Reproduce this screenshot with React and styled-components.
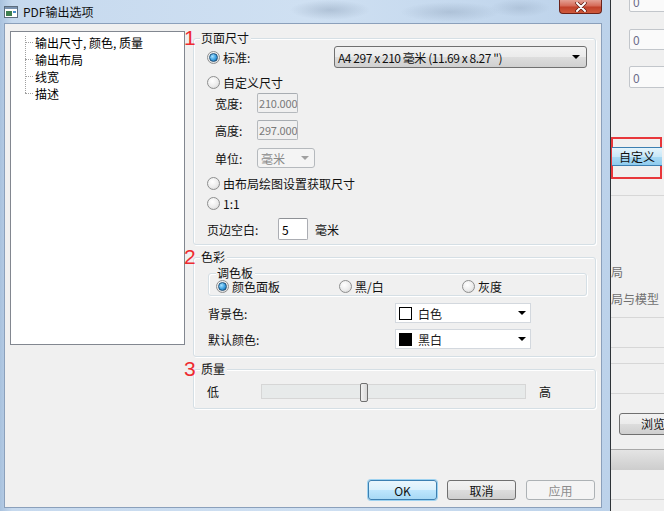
import React from "react";
import styled, { createGlobalStyle } from "styled-components";

const GlobalStyle = createGlobalStyle`
  html, body { margin: 0; padding: 0; }
  body {
    width: 664px;
    height: 511px;
    overflow: hidden;
    background: #f0f0f0;
    font-family: "Noto Sans CJK SC", "Liberation Sans", sans-serif;
    font-size: 12px;
    color: #1b1b1b;
  }
  * { box-sizing: border-box; }
`;

const Screen = styled.div`
  display: flex;
  width: 664px;
  height: 511px;
`;

/* ---------- dialog frame ---------- */
const Dialog = styled.div`
  width: 611px;
  height: 511px;
  flex-shrink: 0;
  display: flex;
  flex-direction: column;
  padding: 0 8px 3px 4px;
  border-right: 1px solid #2e3338;
  background:
    radial-gradient(ellipse 40px 10px at 330px 10px, rgba(120, 140, 165, 0.35), transparent),
    radial-gradient(ellipse 50px 10px at 450px 12px, rgba(120, 140, 165, 0.3), transparent),
    radial-gradient(ellipse 30px 9px at 520px 8px, rgba(120, 140, 165, 0.25), transparent),
    linear-gradient(90deg, #a9c2de 0%, #c6d9ee 2%, #cfe0f2 50%, #bcd2ea 100%);
`;

const TitleBar = styled.div`
  height: 23px;
  display: flex;
  align-items: center;
`;

const TitleText = styled.span`
  margin-left: 5px;
  font-size: 12px;
  line-height: 14px;
  color: #111;
`;

const CloseButton = styled.div`
  margin-left: auto;
  align-self: flex-start;
  width: 43px;
  height: 14px;
  border: 1px solid #6b2219;
  border-top: none;
  border-radius: 0 0 4px 4px;
  background: linear-gradient(#e4a093 0%, #d56b58 45%, #c1412a 55%, #cf5a3c 100%);
  display: flex;
  align-items: center;
  justify-content: center;
`;

const Client = styled.div`
  flex: 1;
  display: flex;
  flex-direction: column;
  background: #f0f0f0;
  border: 1px solid #8ba0bb;
`;

const MainRow = styled.div`
  display: flex;
  padding: 7px 0 0 5px;
`;

/* ---------- tree ---------- */
const Tree = styled.div`
  width: 175px;
  height: 314px;
  border: 1px solid #828790;
  background: #fff;
  padding-top: 2px;
`;

const TreeList = styled.div`
  position: relative;
  padding-left: 24px;
  &::before {
    content: "";
    position: absolute;
    left: 14px;
    top: 2px;
    height: 57px;
    border-left: 1px dotted #a0a0a0;
  }
`;

const TreeItem = styled.div`
  position: relative;
  height: 17px;
  line-height: 17px;
  color: #000;
  &::before {
    content: "";
    position: absolute;
    left: -10px;
    top: 8px;
    width: 8px;
    border-top: 1px dotted #a0a0a0;
  }
`;

/* ---------- group boxes ---------- */
const Column = styled.div`
  margin-left: 8px;
  width: 403px;
  padding-top: 7px;
  display: flex;
  flex-direction: column;
`;

const GroupBox = styled.div`
  position: relative;
  height: ${(p) => p.$h}px;
  margin-top: ${(p) => p.$mt || 0}px;
  margin-left: ${(p) => p.$ml || 0}px;
  width: ${(p) => (p.$w ? `${p.$w}px` : "auto")};
  border: 1px solid #d5dfe5;
  border-radius: 3px;
  box-shadow: inset 1px 1px 0 #fff, 1px 1px 0 #fff;
  padding: ${(p) => p.$pad || "0"};
`;

const GroupTitle = styled.span`
  position: absolute;
  left: ${(p) => p.$left || 6}px;
  top: -9px;
  padding: 0 2px 0 1px;
  line-height: 15px;
  background: #f0f0f0;
  color: #111;
`;

const Mark = styled.span`
  position: absolute;
  left: -10px;
  top: -12px;
  font-family: "Liberation Sans", sans-serif;
  font-size: 21px;
  line-height: 21px;
  color: #ee2b30;
`;

const GroupBody = styled.div`
  display: flex;
  flex-direction: column;
  padding: ${(p) => p.$pt}px 8px 0 13px;
`;

const Row = styled.div`
  display: flex;
  align-items: center;
  height: ${(p) => p.$h || 20}px;
  margin-top: ${(p) => p.$mt || 0}px;
  padding-left: ${(p) => p.$pl || 0}px;
`;

const Label = styled.span`
  width: ${(p) => (p.$w ? `${p.$w}px` : "auto")};
  margin-left: ${(p) => p.$ml || 0}px;
  flex-shrink: 0;
  line-height: 15px;
  color: #111;
`;

/* ---------- radio ---------- */
const RadioWrap = styled.label`
  display: flex;
  align-items: center;
  gap: 3px;
  width: ${(p) => (p.$w ? `${p.$w}px` : "auto")};
  line-height: 15px;
  color: #111;
`;

const RadioCircle = styled.span`
  width: 13px;
  height: 13px;
  border-radius: 50%;
  border: 1px solid #8e8f8f;
  background: radial-gradient(circle at 40% 35%, #ffffff 0%, #ececec 55%, #cfcfcf 100%);
  display: flex;
  align-items: center;
  justify-content: center;
  &::after {
    content: "";
    display: ${(p) => (p.$on ? "block" : "none")};
    width: 7px;
    height: 7px;
    border-radius: 50%;
    border: 1px solid #1d4f78;
    background: radial-gradient(circle at 35% 35%, #a6e2ff 0%, #3a9ee0 55%, #11568f 100%);
  }
`;

const Radio = ({ on, w, children }) => (
  <RadioWrap $w={w}>
    <RadioCircle $on={on} />
    {children}
  </RadioWrap>
);

/* ---------- inputs ---------- */
const TextBox = styled.div`
  width: ${(p) => p.$w}px;
  height: ${(p) => p.$h || 20}px;
  border: 1px solid ${(p) => (p.$disabled ? "#b5b9bd" : "#abadb3")};
  border-top-color: ${(p) => (p.$disabled ? "#a8adb2" : "#8e9196")};
  border-radius: 2px;
  background: ${(p) => (p.$disabled ? "#f0f0f0" : "#fff")};
  color: ${(p) => (p.$disabled ? "#7a7a7a" : "#000")};
  padding-left: ${(p) => (p.$disabled ? 1 : 3)}px;
  font-size: ${(p) => (p.$disabled ? 11 : 12)}px;
  letter-spacing: ${(p) => (p.$disabled ? "-0.2px" : "0")};
  display: flex;
  align-items: center;
  line-height: 15px;
  white-space: nowrap;
  overflow: hidden;
`;

const Arrow = styled.span`
  margin-left: auto;
  margin-right: ${(p) => p.$mr || 6}px;
  width: 0;
  height: 0;
  border-left: 4px solid transparent;
  border-right: 4px solid transparent;
  border-top: 4px solid ${(p) => (p.$dim ? "#a0a0a0" : "#000")};
`;

const Combo = styled.div`
  width: ${(p) => p.$w}px;
  height: ${(p) => p.$h || 22}px;
  margin-left: ${(p) => (p.$auto ? "auto" : "0")};
  border: 1px solid ${(p) => (p.$disabled ? "#b5b9bd" : "#707070")};
  border-radius: 3px;
  background: ${(p) =>
    p.$disabled
      ? "#f4f4f4"
      : "linear-gradient(#f3f3f3 0%, #ebebeb 50%, #dddddd 51%, #d0d0d0 100%)"};
  color: ${(p) => (p.$disabled ? "#8a8a8a" : "#111")};
  display: flex;
  align-items: center;
  padding-left: 3px;
  line-height: 15px;
  white-space: nowrap;
`;

const ComboText = styled.span`
  letter-spacing: -0.45px;
`;

const ColorCombo = styled.div`
  width: 136px;
  height: 20px;
  border: 1px solid #d3d8de;
  background: #fff;
  display: flex;
  align-items: center;
  padding-left: 3px;
  line-height: 15px;
  margin-left: auto;
  margin-right: 56px;
`;

const Swatch = styled.span`
  width: 13px;
  height: 13px;
  border: 1px solid #000;
  background: ${(p) => p.$c};
  margin-right: 6px;
`;

/* ---------- slider ---------- */
const Track = styled.div`
  position: relative;
  width: 265px;
  height: 15px;
  background: #e7eaea;
  border: 1px solid #d6d6d6;
`;

const Thumb = styled.div`
  position: absolute;
  left: 98px;
  top: -2px;
  width: 8px;
  height: 19px;
  border: 1px solid #707070;
  border-radius: 2px;
  background: linear-gradient(90deg, #f2f2f2, #d8d8d8);
`;

/* ---------- buttons ---------- */
const ButtonRow = styled.div`
  margin-top: auto;
  display: flex;
  justify-content: flex-end;
  gap: 10px;
  padding: 0 6px 7px 0;
`;

const Button = styled.div`
  width: 69px;
  height: 20px;
  border-radius: 3px;
  display: flex;
  align-items: center;
  justify-content: center;
  line-height: 15px;
  border: 1px solid
    ${(p) => (p.$variant === "default" ? "#3c7fb1" : p.$variant === "disabled" ? "#adb2b5" : "#707070")};
  background: ${(p) =>
    p.$variant === "default"
      ? "linear-gradient(#eaf6fd 0%, #d9f0fc 50%, #bee6fd 51%, #a7d9f5 100%)"
      : p.$variant === "disabled"
      ? "#f4f4f4"
      : "linear-gradient(#f2f2f2 0%, #ebebeb 50%, #dddddd 51%, #cfcfcf 100%)"};
  box-shadow: ${(p) => (p.$variant === "default" ? "0 0 0 1px #9ed2f0" : "none")};
  color: ${(p) => (p.$variant === "disabled" ? "#8d8d8d" : "#111")};
`;

/* ---------- background application ---------- */
const BackApp = styled.div`
  flex: 1;
  display: flex;
  flex-direction: column;
  background: #f0f0f0;
  overflow: hidden;
`;

const BackInput = styled.div`
  margin-top: ${(p) => p.$mt}px;
  margin-left: 18px;
  height: ${(p) => p.$h}px;
  width: 60px;
  flex-shrink: 0;
  border: 1px solid #c2c6cb;
  border-radius: 2px;
  background: #fafafa;
  color: #6d6d8a;
  padding-left: 3px;
  display: flex;
  align-items: center;
  line-height: 15px;
`;

const RedMark = styled.div`
  margin-top: 49px;
  height: 42px;
  width: 51px;
  flex-shrink: 0;
  border: 2px solid #e8373b;
  padding-top: 8px;
`;

const BlueButton = styled.div`
  height: 19px;
  margin: 0 -2px 0 -1px;
  border-top: 1px solid #3c7fb1;
  border-bottom: 1px solid #3c7fb1;
  background: linear-gradient(#e5f4fc 0%, #c9e8f8 50%, #a9daf4 51%, #8fcbee 100%);
  padding-left: 7px;
  line-height: 17px;
  color: #111;
`;

const Divider = styled.div`
  margin-top: ${(p) => p.$mt}px;
  height: 1px;
  flex-shrink: 0;
  background: #d7d7d7;
`;

const BackText = styled.div`
  margin-top: ${(p) => p.$mt}px;
  height: 16px;
  line-height: 16px;
  flex-shrink: 0;
  color: #707070;
  white-space: nowrap;
`;

const BackButton = styled.div`
  margin: ${(p) => p.$mt}px 0 0 8px;
  height: 22px;
  width: 60px;
  flex-shrink: 0;
  border: 1px solid #707070;
  border-radius: 3px;
  background: linear-gradient(#f2f2f2 0%, #ebebeb 50%, #dddddd 51%, #cfcfcf 100%);
  padding-left: 21px;
  line-height: 20px;
  color: #111;
`;

const BackBar = styled.div`
  margin-top: 14px;
  height: 21px;
  flex-shrink: 0;
  border-top: 1px solid #a8a8a8;
  background: linear-gradient(#e4e4e4, #cdcdcd);
`;

/* ---------- icons ---------- */
const WindowIcon = () => (
  <svg width="14" height="12" viewBox="0 0 14 12">
    <rect x="0.5" y="0.5" width="13" height="11" fill="#fff" stroke="#5d6d7e" />
    <rect x="1" y="1" width="12" height="2" fill="#7b93b0" />
    <rect x="2" y="5" width="6" height="5" fill="#3f7f4f" />
    <rect x="9" y="5" width="3" height="2" fill="#4a8fc9" />
  </svg>
);

const CloseGlyph = () => (
  <svg width="12" height="10" viewBox="0 0 12 10">
    <path d="M2 1 L10 9 M10 1 L2 9" stroke="#5a1a12" strokeWidth="3.4" strokeLinecap="round" />
    <path d="M2 1 L10 9 M10 1 L2 9" stroke="#fff" strokeWidth="2" strokeLinecap="round" />
  </svg>
);

export default function App() {
  return (
    <Screen>
      <GlobalStyle />
      <Dialog>
        <TitleBar>
          <WindowIcon />
          <TitleText>PDF输出选项</TitleText>
          <CloseButton>
            <CloseGlyph />
          </CloseButton>
        </TitleBar>
        <Client>
          <MainRow>
            <Tree>
              <TreeList>
                <TreeItem>输出尺寸, 颜色, 质量</TreeItem>
                <TreeItem>输出布局</TreeItem>
                <TreeItem>线宽</TreeItem>
                <TreeItem>描述</TreeItem>
              </TreeList>
            </Tree>
            <Column>
              <GroupBox $h={207}>
                <Mark>1</Mark>
                <GroupTitle>页面尺寸</GroupTitle>
                <GroupBody $pt={7}>
                  <Row $h={22}>
                    <Radio on>标准:</Radio>
                    <Combo $w={253} $auto>
                      <ComboText>A4 297 x 210 毫米 (11.69 x 8.27 ")</ComboText>
                      <Arrow />
                    </Combo>
                  </Row>
                  <Row $mt={4}>
                    <Radio>自定义尺寸</Radio>
                  </Row>
                  <Row $mt={1} $pl={8}>
                    <Label $w={42}>宽度:</Label>
                    <TextBox $w={41} $disabled>210.000</TextBox>
                  </Row>
                  <Row $mt={7} $pl={8}>
                    <Label $w={42}>高度:</Label>
                    <TextBox $w={41} $disabled>297.000</TextBox>
                  </Row>
                  <Row $mt={8} $pl={8}>
                    <Label $w={42}>单位:</Label>
                    <Combo $w={58} $h={20} $disabled>
                      毫米
                      <Arrow $dim $mr={5} />
                    </Combo>
                  </Row>
                  <Row $mt={5}>
                    <Radio>由布局绘图设置获取尺寸</Radio>
                  </Row>
                  <Row>
                    <Radio>1:1</Radio>
                  </Row>
                  <Row $h={22} $mt={5}>
                    <Label $w={71}>页边空白:</Label>
                    <TextBox $w={30} $h={22}>5</TextBox>
                    <Label $ml={7}>毫米</Label>
                  </Row>
                </GroupBody>
              </GroupBox>

              <GroupBox $h={100} $mt={12}>
                <Mark>2</Mark>
                <GroupTitle>色彩</GroupTitle>
                <GroupBox $h={23} $w={379} $ml={14} $mt={15} $pad="5px 0 0 7px">
                  <GroupTitle $left={7}>调色板</GroupTitle>
                  <Row $h={14}>
                    <Radio on w={123}>颜色面板</Radio>
                    <Radio w={123}>黑/白</Radio>
                    <Radio w={123}>灰度</Radio>
                  </Row>
                </GroupBox>
                <GroupBody $pt={7}>
                  <Row $pl={1}>
                    <Label>背景色:</Label>
                    <ColorCombo>
                      <Swatch $c="#fff" />
                      白色
                      <Arrow $mr={4} />
                    </ColorCombo>
                  </Row>
                  <Row $mt={6} $pl={1}>
                    <Label>默认颜色:</Label>
                    <ColorCombo>
                      <Swatch $c="#000" />
                      黑白
                      <Arrow $mr={4} />
                    </ColorCombo>
                  </Row>
                </GroupBody>
              </GroupBox>

              <GroupBox $h={40} $mt={12}>
                <Mark>3</Mark>
                <GroupTitle>质量</GroupTitle>
                <GroupBody $pt={11}>
                  <Row>
                    <Label $w={54}>低</Label>
                    <Track>
                      <Thumb />
                    </Track>
                    <Label $ml={13}>高</Label>
                  </Row>
                </GroupBody>
              </GroupBox>
            </Column>
          </MainRow>
          <ButtonRow>
            <Button $variant="default">OK</Button>
            <Button>取消</Button>
            <Button $variant="disabled">应用</Button>
          </ButtonRow>
        </Client>
      </Dialog>

      <BackApp>
        <BackInput $mt={-9} $h={21}>0</BackInput>
        <BackInput $mt={17} $h={21}>0</BackInput>
        <BackInput $mt={16} $h={22}>0</BackInput>
        <RedMark>
          <BlueButton>自定义</BlueButton>
        </RedMark>
        <Divider $mt={16} />
        <BackText $mt={68}>局</BackText>
        <BackText $mt={11}>局与模型</BackText>
        <Divider $mt={10} />
        <Divider $mt={29} />
        <Divider $mt={15} />
        <Divider $mt={29} />
        <BackButton $mt={19}>浏览</BackButton>
        <BackBar />
        <Divider $mt={29} />
      </BackApp>
    </Screen>
  );
}
